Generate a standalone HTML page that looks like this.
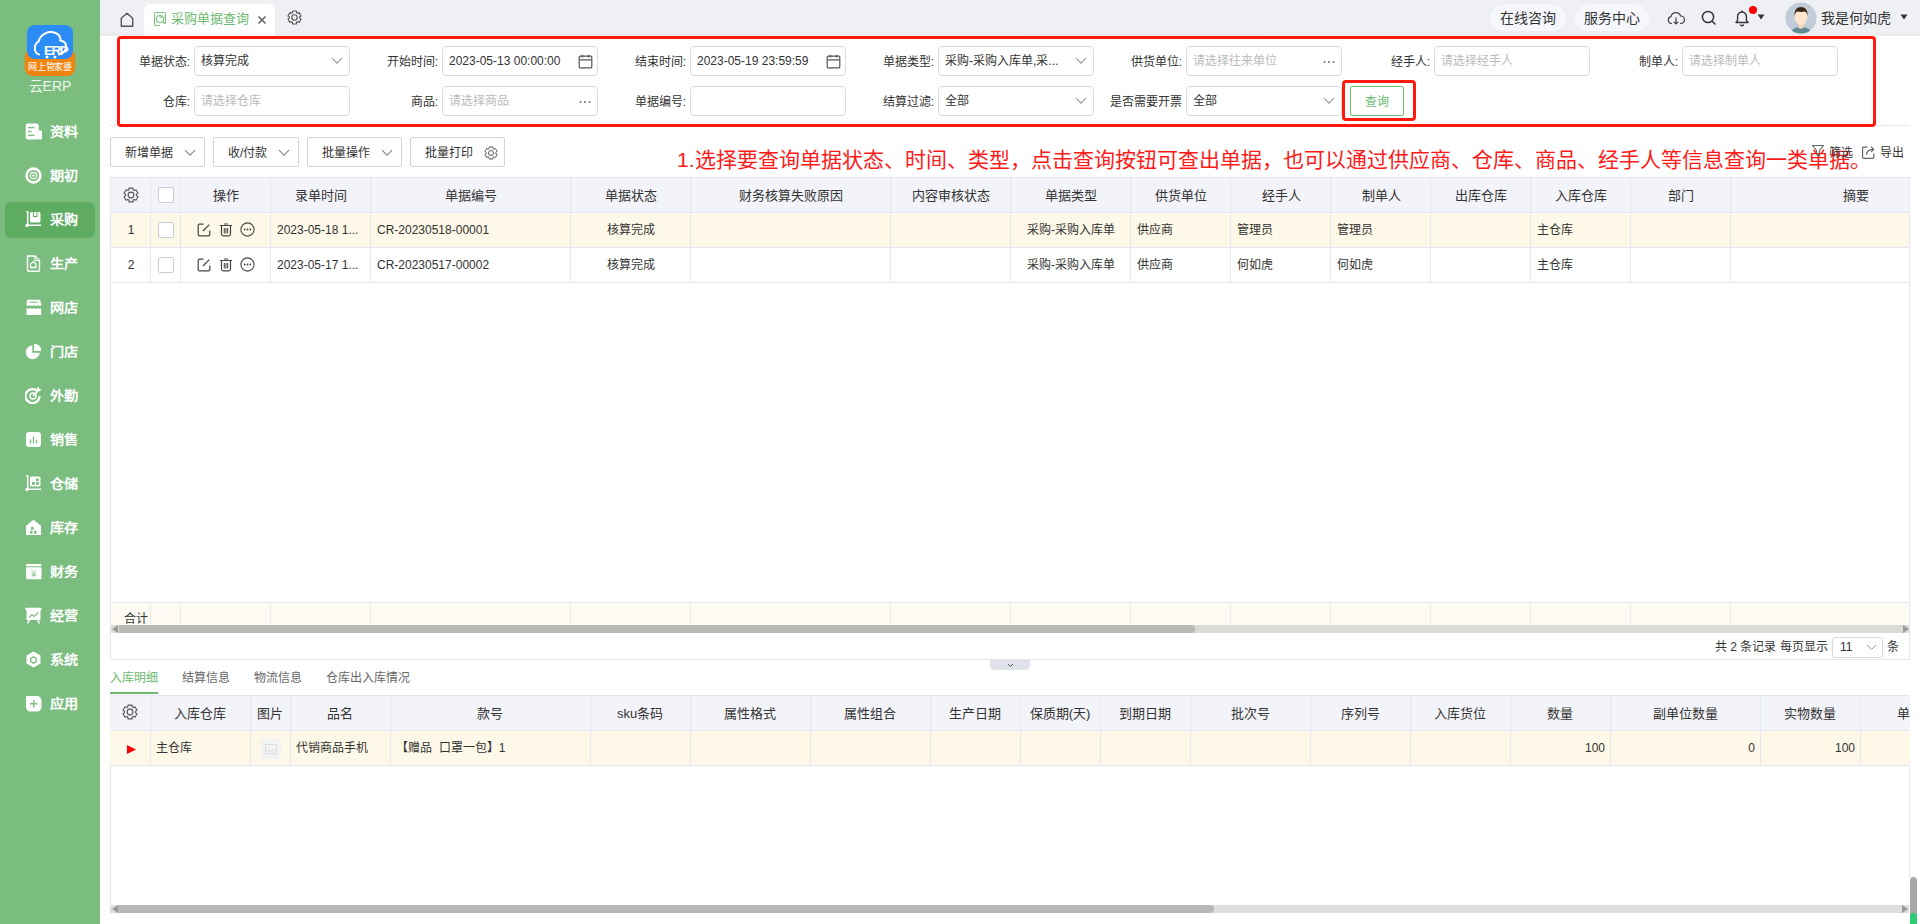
<!DOCTYPE html>
<html lang="zh-CN"><head><meta charset="utf-8">
<style>
*{box-sizing:border-box;margin:0;padding:0}
html,body{width:1920px;height:924px;overflow:hidden;background:#fff;font-family:"Liberation Sans",sans-serif;color:#333;font-size:12px}
.a{position:absolute}
#sb{position:absolute;left:0;top:0;width:100px;height:924px;background:#7bbd7f}
#top{position:absolute;left:100px;top:0;width:1820px;height:36px;background:linear-gradient(#eff0f4 0,#eff0f4 31px,#eaeaec 36px)}
.navt{color:#fff;font-weight:bold;font-size:13px;line-height:19px;transform:scaleX(1.09);transform-origin:0 0;white-space:nowrap}
.lbl{position:absolute;height:30px;line-height:30px;text-align:right;font-size:12px;color:#333;white-space:nowrap}
.inp{position:absolute;width:156px;height:30px;border:1px solid #dadada;border-radius:4px;background:#fff;line-height:28px;padding-left:6px;font-size:12px;color:#333;white-space:nowrap;overflow:hidden}
.ph{color:#bbb}
.btn{position:absolute;top:137px;height:30px;border:1px solid #d3d3d3;border-radius:2px;background:#fff;line-height:31px;font-size:12px;color:#333}
</style></head><body>
<div id="sb">
<svg class="a" style="left:24px;top:24px" width="52" height="54" viewBox="0 0 52 54">
<rect x="0.7" y="25" width="50.5" height="27" rx="8" fill="#f08410"/>
<rect x="3" y="1" width="46" height="34" rx="8" fill="#2b8cf6"/>
<path d="M15 30.5C10 29 9 21 14.5 17.5C16.5 10 25 6 31.5 9C34 10 36 12.5 36.5 15" fill="none" stroke="#fff" stroke-width="2" stroke-linecap="round"/>
<path d="M35 30.5C40 29.5 42 26 42 22.5C42 19 39.5 17 36 16.5" fill="none" stroke="#fff" stroke-width="2" stroke-linecap="round"/>
<text x="20" y="31" font-family="Liberation Sans" font-weight="bold" font-size="13.5" fill="#fff" letter-spacing="-1.6">ERP</text>
<circle cx="23" cy="33" r="1.5" fill="#fff"/><circle cx="31" cy="33" r="1.5" fill="#fff"/>
</svg>
<div class="a" style="left:24px;top:61px;width:52px;text-align:center;color:#fff;font-size:9px;line-height:12px;letter-spacing:-.2px">网上管家婆</div>
<div class="a" style="left:0;top:77px;width:100px;text-align:center;color:#eef6ee;font-size:14px;line-height:18px">云ERP</div>
<svg class="a" style="left:25px;top:123px" width="17" height="17" viewBox="0 0 17 17"><rect x="0.7" y="0.5" width="13" height="16" rx="2" fill="#fff"/><rect x="13.2" y="7.5" width="3.8" height="9" rx="1" fill="#fff"/><path d="M3 4.6h6.5M3 8.5h3.5M3 12.3h6.5" stroke="#7bbd7f" stroke-width="1.3"/></svg>
<div class="a navt" style="left:50px;top:122px">资料</div>
<svg class="a" style="left:25px;top:167px" width="17" height="17" viewBox="0 0 17 17"><circle cx="8.5" cy="8.5" r="6.9" fill="none" stroke="#fff" stroke-width="2.6"/><circle cx="8.5" cy="8.5" r="3.2" fill="none" stroke="#fff" stroke-width="1.2"/><circle cx="8.5" cy="8.5" r="1.2" fill="#fff"/></svg>
<div class="a navt" style="left:50px;top:166px">期初</div>
<div class="a" style="left:5px;top:202px;width:90px;height:36px;background:#5eab62;border-radius:6px"></div>
<svg class="a" style="left:25px;top:211px" width="17" height="17" viewBox="0 0 17 17"><path d="M1.2 0.8h1.5v13.5h13.5" fill="none" stroke="#fff" stroke-width="1.5"/><circle cx="2" cy="14.5" r="1.7" fill="#fff"/><rect x="5" y="1" width="10.5" height="10.5" rx="1.5" fill="#fff"/><path d="M8.5 1v4.5h3.5V1" fill="none" stroke="#5eab62" stroke-width="1.1"/></svg>
<div class="a navt" style="left:50px;top:210px">采购</div>
<svg class="a" style="left:25px;top:255px" width="17" height="17" viewBox="0 0 17 17"><path d="M2.5 1h7.5l4.5 4.5v9.5c0 .8-.6 1.3-1.3 1.3H3.8c-.8 0-1.3-.5-1.3-1.3z" fill="none" stroke="#fff" stroke-width="1.4"/><path d="M10 1v4.5h4.5" fill="none" stroke="#fff" stroke-width="1.2"/><path d="M5.5 12.5V9l2.8-2.3L11 9v3.5z" fill="none" stroke="#fff" stroke-width="1.3"/></svg>
<div class="a navt" style="left:50px;top:254px">生产</div>
<svg class="a" style="left:25px;top:299px" width="17" height="17" viewBox="0 0 17 17"><path d="M2 0.8h13l1.5 5.2c-.8 1.4-2.6 1.4-3.6 0-1 1.4-2.8 1.4-3.8 0-1 1.4-2.8 1.4-3.8 0-1 1.4-2.8 1.4-3.8 0z" fill="#fff"/><path d="M1.5 9c1 .9 2.7.9 3.7 0 1 .9 2.7.9 3.7 0 1 .9 2.7.9 3.7 0 1 .9 2.6.9 3.6 0v7H1.5z" fill="#fff"/><path d="M4.5 3.2h8" stroke="#7bbd7f" stroke-width="1.1"/></svg>
<div class="a navt" style="left:50px;top:298px">网店</div>
<svg class="a" style="left:25px;top:343px" width="17" height="17" viewBox="0 0 17 17"><path d="M7.3 2.2A7 7 0 1 0 14.8 9.7H7.3z" fill="#fff"/><path d="M9 0.7A7 7 0 0 1 16.3 8H9z" fill="#fff"/></svg>
<div class="a navt" style="left:50px;top:342px">门店</div>
<svg class="a" style="left:25px;top:387px" width="17" height="17" viewBox="0 0 17 17"><path d="M12.5 4.2A7 7 0 1 0 14.5 9" fill="none" stroke="#fff" stroke-width="2.2"/><circle cx="8" cy="9" r="3" fill="none" stroke="#fff" stroke-width="1.4"/><path d="M8 9l6-6" stroke="#fff" stroke-width="1.6"/><path d="M12 0.8l.3 3 3 .3 1.2-1.5-2.2-.3-.3-2.2z" fill="#fff"/></svg>
<div class="a navt" style="left:50px;top:386px">外勤</div>
<svg class="a" style="left:25px;top:431px" width="17" height="17" viewBox="0 0 17 17"><rect x="1" y="1" width="15" height="15" rx="3" fill="#fff"/><path d="M5.5 12.5V8.5M8.5 12.5V5.5M11.5 12.5V9" stroke="#7bbd7f" stroke-width="1.3"/></svg>
<div class="a navt" style="left:50px;top:430px">销售</div>
<svg class="a" style="left:25px;top:475px" width="17" height="17" viewBox="0 0 17 17"><path d="M1.2 0.8h1.5v13.5h13.5" fill="none" stroke="#fff" stroke-width="1.5"/><circle cx="2" cy="14.5" r="1.7" fill="#fff"/><rect x="5" y="1.5" width="10.5" height="10" rx="1.5" fill="#fff"/><rect x="7" y="7" width="2.8" height="2.8" fill="#7bbd7f"/><rect x="11" y="7" width="2.8" height="2.8" fill="#7bbd7f"/><rect x="11" y="3.5" width="2.8" height="2.5" fill="#7bbd7f"/></svg>
<div class="a navt" style="left:50px;top:474px">仓储</div>
<svg class="a" style="left:25px;top:519px" width="17" height="17" viewBox="0 0 17 17"><path d="M8.5 0.8l7.5 6V16H1V6.8z" fill="#fff"/><rect x="6" y="8" width="2.6" height="2.8" fill="#7bbd7f"/><rect x="5" y="11.8" width="2.6" height="2.8" fill="#7bbd7f"/><rect x="9" y="11.8" width="2.6" height="2.8" fill="#7bbd7f"/></svg>
<div class="a navt" style="left:50px;top:518px">库存</div>
<svg class="a" style="left:25px;top:563px" width="17" height="17" viewBox="0 0 17 17"><rect x="1" y="1" width="15.5" height="2.2" rx=".5" fill="#fff"/><rect x="1" y="4.2" width="15.5" height="12" rx="1" fill="#fff"/><path d="M6.3 7l2.5 2.6L11.3 7M8.8 9.6v4.4M6.5 10.8h4.6M6.5 12.3h4.6" stroke="#7bbd7f" stroke-width=".8" fill="none"/></svg>
<div class="a navt" style="left:50px;top:562px">财务</div>
<svg class="a" style="left:25px;top:607px" width="17" height="17" viewBox="0 0 17 17"><rect x="0.5" y="0.8" width="16" height="2.4" rx=".5" fill="#fff"/><rect x="1.5" y="3" width="14" height="10" fill="#fff"/><path d="M4 10.5l3-3 2.2 2 3.8-4" stroke="#7bbd7f" stroke-width="1.1" fill="none"/><path d="M4.5 12.5l-2 3.8M12.5 12.5l2 3.8" stroke="#fff" stroke-width="1.5"/></svg>
<div class="a navt" style="left:50px;top:606px">经营</div>
<svg class="a" style="left:25px;top:651px" width="17" height="17" viewBox="0 0 17 17"><path d="M8.5 0.5l7 4v8l-7 4-7-4v-8z" fill="#fff"/><path d="M8.5 5l3.4 2v3.9l-3.4 2-3.4-2V7z" fill="#7bbd7f"/><path d="M8.5 6.5l2.1 1.2v2.4l-2.1 1.2-2.1-1.2V7.7z" fill="#fff"/></svg>
<div class="a navt" style="left:50px;top:650px">系统</div>
<svg class="a" style="left:25px;top:695px" width="17" height="17" viewBox="0 0 17 17"><path d="M1 1h11a4.5 4.5 0 0 1 4.5 4.5v6.5A4.5 4.5 0 0 1 12 16.5H5.5A4.5 4.5 0 0 1 1 12z" fill="#fff"/><path d="M8.8 5v7.5M5 8.8h7.5" stroke="#7bbd7f" stroke-width="1.4"/></svg>
<div class="a navt" style="left:50px;top:694px">应用</div>
</div>
<div id="top">
<svg class="a" style="left:19px;top:12px" width="16" height="16" viewBox="0 0 16 16"><path d="M2.3 14.3V6.3L8 1.3l5.7 5v8z" fill="none" stroke="#555" stroke-width="1.4" stroke-linejoin="round"/></svg>
<div class="a" style="left:44px;top:4px;width:131px;height:32px;background:#fff;border-radius:6px 6px 0 0"></div>
<svg class="a" style="left:53px;top:11px" width="15" height="16" viewBox="0 0 15 16"><path d="M12.5 12.5V3.3c0-1-.8-1.8-1.8-1.8H3.3c-1 0-1.8.8-1.8 1.8v9.4c0 1 .8 1.8 1.8 1.8H7" fill="none" stroke="#7cc07f" stroke-width="1.1"/><circle cx="7" cy="8" r="3.5" fill="none" stroke="#7cc07f" stroke-width="1.1"/><path d="M9.5 10.5l2.5 2.5M6.5 6a2 2 0 0 1 2.5 1" stroke="#7cc07f" stroke-width="1.1" fill="none"/></svg>
<div class="a" style="left:71px;top:10px;font-size:13px;line-height:18px;color:#6cb96f">采购单据查询</div>
<svg class="a" style="left:157px;top:15px" width="10" height="10" viewBox="0 0 10 10"><path d="M1.5 1.5l7 7M8.5 1.5l-7 7" stroke="#666" stroke-width="1.6"/></svg>
<svg class="a" style="left:187px;top:10px" width="15" height="15" viewBox="0 0 16 16"><path d="M5.82 2.95 L5.96 1.10 L10.04 1.10 L10.18 2.95 L11.28 3.58 L12.96 2.78 L15.00 6.32 L13.46 7.37 L13.46 8.63 L15.00 9.68 L12.96 13.22 L11.28 12.42 L10.18 13.05 L10.04 14.90 L5.96 14.90 L5.82 13.05 L4.72 12.42 L3.04 13.22 L1.00 9.68 L2.54 8.63 L2.54 7.37 L1.00 6.32 L3.04 2.78 L4.72 3.58Z" fill="none" stroke="#555" stroke-width="1.2" stroke-linejoin="round"/><circle cx="8" cy="8" r="2.9" fill="none" stroke="#555" stroke-width="1.2"/></svg>
<div class="a" style="left:1391px;top:5px;width:74px;height:26px;border-radius:13px;background:#f5f7fc;border:1px solid #fafbfd;text-align:center;line-height:24px;font-size:14px;color:#333">在线咨询</div>
<div class="a" style="left:1475px;top:5px;width:74px;height:26px;border-radius:13px;background:#f5f7fc;border:1px solid #fafbfd;text-align:center;line-height:24px;font-size:14px;color:#333">服务中心</div>
<svg class="a" style="left:1567px;top:10px" width="18" height="16" viewBox="0 0 18 16"><path d="M5 13.5H4.5A3.5 3.5 0 0 1 4 6.6 5 5 0 0 1 13.6 6a3.5 3.5 0 0 1 .2 7.5H13" fill="none" stroke="#444" stroke-width="1.2"/><path d="M9 7.5v6.5M6.8 11.8L9 14l2.2-2.2" fill="none" stroke="#444" stroke-width="1.2"/></svg>
<svg class="a" style="left:1601px;top:10px" width="16" height="16" viewBox="0 0 16 16"><circle cx="7" cy="7" r="5.6" fill="none" stroke="#333" stroke-width="1.5"/><path d="M11.2 11.2l3.3 3.3" stroke="#333" stroke-width="1.5"/></svg>
<svg class="a" style="left:1634px;top:9px" width="16" height="18" viewBox="0 0 16 18"><path d="M2 13.5h12l-1.6-2.2V7.5A4.4 4.4 0 0 0 8 3a4.4 4.4 0 0 0-4.4 4.5v3.8z" fill="none" stroke="#333" stroke-width="1.4" stroke-linejoin="round"/><path d="M8 1.5V3M6.3 15.5a1.8 1.8 0 0 0 3.4 0" fill="none" stroke="#333" stroke-width="1.4"/></svg>
<div class="a" style="left:1649px;top:6px;width:8px;height:8px;border-radius:50%;background:#f00"></div>
<svg class="a" style="left:1657px;top:14px" width="8" height="6" viewBox="0 0 8 6"><path d="M0.5 .5h7L4 5.5z" fill="#333"/></svg>
<svg class="a" style="left:1685px;top:2px" width="32" height="32" viewBox="0 0 32 32"><defs><clipPath id="avc"><circle cx="16" cy="16" r="15.5"/></clipPath></defs><circle cx="16" cy="16" r="15.5" fill="#c2ccd8"/><g clip-path="url(#avc)"><path d="M6 32c0-5 4-7 10-7s10 2 10 7z" fill="#5f8a96"/><path d="M13.5 22h5v4c-1.5 1-3.5 1-5 0z" fill="#f3d4b4"/><ellipse cx="16" cy="15" rx="6.3" ry="8" fill="#fde6cc"/><path d="M9.5 14c-.5-6 2.5-9 6.5-9s7 3 6.5 9c-.5-2.5-1.5-4-2.5-4.5-2 .5-6 .5-8 0-1 .5-2 2-2.5 4.5z" fill="#3d2418"/></g></svg>
<div class="a" style="left:1721px;top:9px;font-size:14px;line-height:18px;color:#333">我是何如虎</div>
<svg class="a" style="left:1800px;top:14px" width="8" height="6" viewBox="0 0 8 6"><path d="M0.5 .5h7L4 5.5z" fill="#333"/></svg>
</div>
<!--filter-->
<div class="lbl" style="left:75px;top:47px;width:115px">单据状态:</div>
<div class="inp" style="left:194px;top:46px"><span class="">核算完成</span><svg class="a" style="right:6px;top:10px" width="12" height="8" viewBox="0 0 12 8"><path d="M1 1.2l5 5 5-5" fill="none" stroke="#999" stroke-width="1.1"/></svg></div>
<div class="lbl" style="left:323px;top:47px;width:115px">开始时间:</div>
<div class="inp" style="left:442px;top:46px"><span class="">2023-05-13 00:00:00</span><svg class="a" style="right:4px;top:7px" width="15" height="15" viewBox="0 0 15 15"><rect x="1.2" y="2.2" width="12.6" height="11.6" rx="1" fill="none" stroke="#555" stroke-width="1.2"/><path d="M1.2 5.8h12.6M4.5 0.8v2.6M10.5 0.8v2.6" stroke="#555" stroke-width="1.2"/></svg></div>
<div class="lbl" style="left:571px;top:47px;width:115px">结束时间:</div>
<div class="inp" style="left:690px;top:46px"><span class="">2023-05-19 23:59:59</span><svg class="a" style="right:4px;top:7px" width="15" height="15" viewBox="0 0 15 15"><rect x="1.2" y="2.2" width="12.6" height="11.6" rx="1" fill="none" stroke="#555" stroke-width="1.2"/><path d="M1.2 5.8h12.6M4.5 0.8v2.6M10.5 0.8v2.6" stroke="#555" stroke-width="1.2"/></svg></div>
<div class="lbl" style="left:819px;top:47px;width:115px">单据类型:</div>
<div class="inp" style="left:938px;top:46px"><span class="">采购-采购入库单,采...</span><svg class="a" style="right:6px;top:10px" width="12" height="8" viewBox="0 0 12 8"><path d="M1 1.2l5 5 5-5" fill="none" stroke="#999" stroke-width="1.1"/></svg></div>
<div class="lbl" style="left:1067px;top:47px;width:115px">供货单位:</div>
<div class="inp" style="left:1186px;top:46px"><span class="ph">请选择往来单位</span><svg class="a" style="right:5px;top:13px" width="14" height="4" viewBox="0 0 14 4"><circle cx="2.5" cy="2" r="1.1" fill="#777"/><circle cx="7" cy="2" r="1.1" fill="#777"/><circle cx="11.5" cy="2" r="1.1" fill="#777"/></svg></div>
<div class="lbl" style="left:1315px;top:47px;width:115px">经手人:</div>
<div class="inp" style="left:1434px;top:46px"><span class="ph">请选择经手人</span></div>
<div class="lbl" style="left:1563px;top:47px;width:115px">制单人:</div>
<div class="inp" style="left:1682px;top:46px"><span class="ph">请选择制单人</span></div>
<div class="lbl" style="left:75px;top:87px;width:115px">仓库:</div>
<div class="inp" style="left:194px;top:86px"><span class="ph">请选择仓库</span></div>
<div class="lbl" style="left:323px;top:87px;width:115px">商品:</div>
<div class="inp" style="left:442px;top:86px"><span class="ph">请选择商品</span><svg class="a" style="right:5px;top:13px" width="14" height="4" viewBox="0 0 14 4"><circle cx="2.5" cy="2" r="1.1" fill="#777"/><circle cx="7" cy="2" r="1.1" fill="#777"/><circle cx="11.5" cy="2" r="1.1" fill="#777"/></svg></div>
<div class="lbl" style="left:571px;top:87px;width:115px">单据编号:</div>
<div class="inp" style="left:690px;top:86px"><span class=""></span></div>
<div class="lbl" style="left:819px;top:87px;width:115px">结算过滤:</div>
<div class="inp" style="left:938px;top:86px"><span class="">全部</span><svg class="a" style="right:6px;top:10px" width="12" height="8" viewBox="0 0 12 8"><path d="M1 1.2l5 5 5-5" fill="none" stroke="#999" stroke-width="1.1"/></svg></div>
<div class="lbl" style="left:1067px;top:87px;width:115px">是否需要开票</div>
<div class="inp" style="left:1186px;top:86px"><span class="">全部</span><svg class="a" style="right:6px;top:10px" width="12" height="8" viewBox="0 0 12 8"><path d="M1 1.2l5 5 5-5" fill="none" stroke="#999" stroke-width="1.1"/></svg></div>
<div class="a" style="left:1350px;top:86px;width:54px;height:30px;border:1px solid #77bf7a;border-radius:2px;text-align:center;line-height:30px;color:#6cb96f;font-size:12px">查询</div>
<div class="a" style="left:110px;top:125px;width:1800px;height:1px;background:#e6e8ee"></div>
<div class="a" style="left:117px;top:36px;width:1759px;height:91px;border:3px solid #ff1a0d;border-radius:4px"></div>
<div class="a" style="left:1342px;top:80px;width:74px;height:41px;border:3px solid #ff1a0d;border-radius:4px"></div>
<!--table1-->
<div class="btn" style="left:110px;width:95px"><span class="a" style="left:14px;top:0">新增单据</span><svg class="a" style="right:8px;top:11px" width="12" height="8" viewBox="0 0 12 8"><path d="M1 1.2l5 5 5-5" fill="none" stroke="#888" stroke-width="1.1"/></svg></div>
<div class="btn" style="left:213px;width:86px"><span class="a" style="left:14px;top:0">收/付款</span><svg class="a" style="right:8px;top:11px" width="12" height="8" viewBox="0 0 12 8"><path d="M1 1.2l5 5 5-5" fill="none" stroke="#888" stroke-width="1.1"/></svg></div>
<div class="btn" style="left:307px;width:95px"><span class="a" style="left:14px;top:0">批量操作</span><svg class="a" style="right:8px;top:11px" width="12" height="8" viewBox="0 0 12 8"><path d="M1 1.2l5 5 5-5" fill="none" stroke="#888" stroke-width="1.1"/></svg></div>
<div class="btn" style="left:410px;width:95px"><span class="a" style="left:14px;top:0">批量打印</span></div>
<svg class="a" style="left:484px;top:146px" width="14" height="14" viewBox="0 0 16 16"><path d="M5.82 2.95 L5.96 1.10 L10.04 1.10 L10.18 2.95 L11.28 3.58 L12.96 2.78 L15.00 6.32 L13.46 7.37 L13.46 8.63 L15.00 9.68 L12.96 13.22 L11.28 12.42 L10.18 13.05 L10.04 14.90 L5.96 14.90 L5.82 13.05 L4.72 12.42 L3.04 13.22 L1.00 9.68 L2.54 8.63 L2.54 7.37 L1.00 6.32 L3.04 2.78 L4.72 3.58Z" fill="none" stroke="#555" stroke-width="1.1" stroke-linejoin="round"/><circle cx="8" cy="8" r="2.9" fill="none" stroke="#555" stroke-width="1.1"/></svg>
<div class="a" style="left:677px;top:146px;font-size:21px;line-height:28px;color:#ff1a1a;white-space:nowrap">1.选择要查询单据状态、时间、类型，点击查询按钮可查出单据，也可以通过供应商、仓库、商品、经手人等信息查询一类单据。</div>
<svg class="a" style="left:1811px;top:144px" width="14" height="14" viewBox="0 0 14 14"><path d="M1.5 1.5h11L8.5 6.5v5.5l-3-1.5V6.5z" fill="none" stroke="#666" stroke-width="1.1" stroke-linejoin="round"/></svg>
<div class="a" style="left:1829px;top:145px;font-size:12px;line-height:16px;color:#333">筛选</div>
<svg class="a" style="left:1861px;top:145px" width="16" height="15" viewBox="0 0 15 14"><path d="M6 2H2.5c-.6 0-1 .4-1 1v8.5c0 .6.4 1 1 1H11c.6 0 1-.4 1-1V8" fill="none" stroke="#666" stroke-width="1.1"/><path d="M5 9c.5-3 3-5 6.5-5M9.5 1.5l2.5 2.5-2.5 2.5" fill="none" stroke="#666" stroke-width="1.1"/></svg>
<div class="a" style="left:1880px;top:145px;font-size:12px;line-height:16px;color:#333">导出</div>
<div class="a" style="left:110px;top:177px;width:1800px;height:483px;border:1px solid #e4e7f0;overflow:hidden">
<div class="a" style="left:0;top:0;width:1800px;height:35px;background:#f3f4f9;border-bottom:1px solid #e4e7f0"></div>
<div class="a" style="left:0;top:35px;width:1800px;height:35px;background:#fdf8e8;border-bottom:1px solid #e4e7f0"></div>
<div class="a" style="left:0;top:70px;width:1800px;height:35px;background:#fff;border-bottom:1px solid #e4e7f0"></div>
<div class="a" style="left:0;top:424px;width:1800px;height:31px;background:#fdfbf3;border-top:1px solid #e4e7f0"></div>
<div class="a" style="left:39px;top:0;width:1px;height:105px;background:#e4e7f0"></div>
<div class="a" style="left:39px;top:424px;width:1px;height:31px;background:#ebeae4"></div>
<div class="a" style="left:69px;top:0;width:1px;height:105px;background:#e4e7f0"></div>
<div class="a" style="left:69px;top:424px;width:1px;height:31px;background:#ebeae4"></div>
<div class="a" style="left:70px;top:0;width:90px;height:35px;line-height:35px;text-align:center;font-size:13px;color:#333">操作</div>
<div class="a" style="left:159px;top:0;width:1px;height:105px;background:#e4e7f0"></div>
<div class="a" style="left:159px;top:424px;width:1px;height:31px;background:#ebeae4"></div>
<div class="a" style="left:160px;top:0;width:100px;height:35px;line-height:35px;text-align:center;font-size:13px;color:#333">录单时间</div>
<div class="a" style="left:259px;top:0;width:1px;height:105px;background:#e4e7f0"></div>
<div class="a" style="left:259px;top:424px;width:1px;height:31px;background:#ebeae4"></div>
<div class="a" style="left:260px;top:0;width:200px;height:35px;line-height:35px;text-align:center;font-size:13px;color:#333">单据编号</div>
<div class="a" style="left:459px;top:0;width:1px;height:105px;background:#e4e7f0"></div>
<div class="a" style="left:459px;top:424px;width:1px;height:31px;background:#ebeae4"></div>
<div class="a" style="left:460px;top:0;width:120px;height:35px;line-height:35px;text-align:center;font-size:13px;color:#333">单据状态</div>
<div class="a" style="left:579px;top:0;width:1px;height:105px;background:#e4e7f0"></div>
<div class="a" style="left:579px;top:424px;width:1px;height:31px;background:#ebeae4"></div>
<div class="a" style="left:580px;top:0;width:200px;height:35px;line-height:35px;text-align:center;font-size:13px;color:#333">财务核算失败原因</div>
<div class="a" style="left:779px;top:0;width:1px;height:105px;background:#e4e7f0"></div>
<div class="a" style="left:779px;top:424px;width:1px;height:31px;background:#ebeae4"></div>
<div class="a" style="left:780px;top:0;width:120px;height:35px;line-height:35px;text-align:center;font-size:13px;color:#333">内容审核状态</div>
<div class="a" style="left:899px;top:0;width:1px;height:105px;background:#e4e7f0"></div>
<div class="a" style="left:899px;top:424px;width:1px;height:31px;background:#ebeae4"></div>
<div class="a" style="left:900px;top:0;width:120px;height:35px;line-height:35px;text-align:center;font-size:13px;color:#333">单据类型</div>
<div class="a" style="left:1019px;top:0;width:1px;height:105px;background:#e4e7f0"></div>
<div class="a" style="left:1019px;top:424px;width:1px;height:31px;background:#ebeae4"></div>
<div class="a" style="left:1020px;top:0;width:100px;height:35px;line-height:35px;text-align:center;font-size:13px;color:#333">供货单位</div>
<div class="a" style="left:1119px;top:0;width:1px;height:105px;background:#e4e7f0"></div>
<div class="a" style="left:1119px;top:424px;width:1px;height:31px;background:#ebeae4"></div>
<div class="a" style="left:1120px;top:0;width:100px;height:35px;line-height:35px;text-align:center;font-size:13px;color:#333">经手人</div>
<div class="a" style="left:1219px;top:0;width:1px;height:105px;background:#e4e7f0"></div>
<div class="a" style="left:1219px;top:424px;width:1px;height:31px;background:#ebeae4"></div>
<div class="a" style="left:1220px;top:0;width:100px;height:35px;line-height:35px;text-align:center;font-size:13px;color:#333">制单人</div>
<div class="a" style="left:1319px;top:0;width:1px;height:105px;background:#e4e7f0"></div>
<div class="a" style="left:1319px;top:424px;width:1px;height:31px;background:#ebeae4"></div>
<div class="a" style="left:1320px;top:0;width:100px;height:35px;line-height:35px;text-align:center;font-size:13px;color:#333">出库仓库</div>
<div class="a" style="left:1419px;top:0;width:1px;height:105px;background:#e4e7f0"></div>
<div class="a" style="left:1419px;top:424px;width:1px;height:31px;background:#ebeae4"></div>
<div class="a" style="left:1420px;top:0;width:100px;height:35px;line-height:35px;text-align:center;font-size:13px;color:#333">入库仓库</div>
<div class="a" style="left:1519px;top:0;width:1px;height:105px;background:#e4e7f0"></div>
<div class="a" style="left:1519px;top:424px;width:1px;height:31px;background:#ebeae4"></div>
<div class="a" style="left:1520px;top:0;width:100px;height:35px;line-height:35px;text-align:center;font-size:13px;color:#333">部门</div>
<div class="a" style="left:1619px;top:0;width:1px;height:105px;background:#e4e7f0"></div>
<div class="a" style="left:1619px;top:424px;width:1px;height:31px;background:#ebeae4"></div>
<div class="a" style="left:1620px;top:0;width:250px;height:35px;line-height:35px;text-align:center;font-size:13px;color:#333">摘要</div>
<svg class="a" style="left:12px;top:9px" width="16" height="16" viewBox="0 0 16 16"><path d="M5.82 2.95 L5.96 1.10 L10.04 1.10 L10.18 2.95 L11.28 3.58 L12.96 2.78 L15.00 6.32 L13.46 7.37 L13.46 8.63 L15.00 9.68 L12.96 13.22 L11.28 12.42 L10.18 13.05 L10.04 14.90 L5.96 14.90 L5.82 13.05 L4.72 12.42 L3.04 13.22 L1.00 9.68 L2.54 8.63 L2.54 7.37 L1.00 6.32 L3.04 2.78 L4.72 3.58Z" fill="none" stroke="#555" stroke-width="1.1" stroke-linejoin="round"/><circle cx="8" cy="8" r="2.9" fill="none" stroke="#555" stroke-width="1.1"/></svg>
<div class="a" style="left:47px;top:9px;width:16px;height:16px;border:1px solid #c9cdd4;border-radius:2px;background:#fff"></div>
<div class="a" style="left:0;top:35px;width:40px;height:35px;line-height:35px;text-align:center">1</div>
<div class="a" style="left:47px;top:44px;width:16px;height:16px;border:1px solid #c9cdd4;border-radius:2px;background:#fff"></div>
<svg class="a" style="left:86px;top:45px" width="14" height="14" viewBox="0 0 14 14"><path d="M6.5 1.2H2.5c-.7 0-1.3.6-1.3 1.3v9c0 .7.6 1.3 1.3 1.3h9c.7 0 1.3-.6 1.3-1.3V7.5" fill="none" stroke="#444" stroke-width="1.2"/><path d="M6 8l6.3-6.3" stroke="#444" stroke-width="1.2"/></svg>
<svg class="a" style="left:108px;top:45px" width="14" height="14" viewBox="0 0 14 14"><path d="M1 2.5h12M5 1h4" stroke="#444" stroke-width="1.2"/><path d="M2.5 2.5v8.5c0 1 .8 1.8 1.8 1.8h5.4c1 0 1.8-.8 1.8-1.8V2.5" fill="none" stroke="#444" stroke-width="1.2"/><path d="M5.3 5v5.5M7 5v5.5M8.7 5v5.5" stroke="#444" stroke-width="1"/></svg>
<svg class="a" style="left:129px;top:44px" width="15" height="15" viewBox="0 0 15 15"><circle cx="7.5" cy="7.5" r="6.6" fill="none" stroke="#444" stroke-width="1.1"/><circle cx="4.7" cy="7.5" r=".9" fill="#444"/><circle cx="7.5" cy="7.5" r=".9" fill="#444"/><circle cx="10.3" cy="7.5" r=".9" fill="#444"/></svg>
<div class="a" style="left:160px;top:35px;width:100px;height:35px;line-height:35px;text-align:left;padding-left:6px;white-space:nowrap">2023-05-18 1...</div>
<div class="a" style="left:260px;top:35px;width:200px;height:35px;line-height:35px;text-align:left;padding-left:6px;white-space:nowrap">CR-20230518-00001</div>
<div class="a" style="left:460px;top:35px;width:120px;height:35px;line-height:35px;text-align:center;white-space:nowrap">核算完成</div>
<div class="a" style="left:900px;top:35px;width:120px;height:35px;line-height:35px;text-align:center;white-space:nowrap">采购-采购入库单</div>
<div class="a" style="left:1020px;top:35px;width:100px;height:35px;line-height:35px;text-align:left;padding-left:6px;white-space:nowrap">供应商</div>
<div class="a" style="left:1120px;top:35px;width:100px;height:35px;line-height:35px;text-align:left;padding-left:6px;white-space:nowrap">管理员</div>
<div class="a" style="left:1220px;top:35px;width:100px;height:35px;line-height:35px;text-align:left;padding-left:6px;white-space:nowrap">管理员</div>
<div class="a" style="left:1420px;top:35px;width:100px;height:35px;line-height:35px;text-align:left;padding-left:6px;white-space:nowrap">主仓库</div>
<div class="a" style="left:0;top:70px;width:40px;height:35px;line-height:35px;text-align:center">2</div>
<div class="a" style="left:47px;top:79px;width:16px;height:16px;border:1px solid #c9cdd4;border-radius:2px;background:#fff"></div>
<svg class="a" style="left:86px;top:80px" width="14" height="14" viewBox="0 0 14 14"><path d="M6.5 1.2H2.5c-.7 0-1.3.6-1.3 1.3v9c0 .7.6 1.3 1.3 1.3h9c.7 0 1.3-.6 1.3-1.3V7.5" fill="none" stroke="#444" stroke-width="1.2"/><path d="M6 8l6.3-6.3" stroke="#444" stroke-width="1.2"/></svg>
<svg class="a" style="left:108px;top:80px" width="14" height="14" viewBox="0 0 14 14"><path d="M1 2.5h12M5 1h4" stroke="#444" stroke-width="1.2"/><path d="M2.5 2.5v8.5c0 1 .8 1.8 1.8 1.8h5.4c1 0 1.8-.8 1.8-1.8V2.5" fill="none" stroke="#444" stroke-width="1.2"/><path d="M5.3 5v5.5M7 5v5.5M8.7 5v5.5" stroke="#444" stroke-width="1"/></svg>
<svg class="a" style="left:129px;top:79px" width="15" height="15" viewBox="0 0 15 15"><circle cx="7.5" cy="7.5" r="6.6" fill="none" stroke="#444" stroke-width="1.1"/><circle cx="4.7" cy="7.5" r=".9" fill="#444"/><circle cx="7.5" cy="7.5" r=".9" fill="#444"/><circle cx="10.3" cy="7.5" r=".9" fill="#444"/></svg>
<div class="a" style="left:160px;top:70px;width:100px;height:35px;line-height:35px;text-align:left;padding-left:6px;white-space:nowrap">2023-05-17 1...</div>
<div class="a" style="left:260px;top:70px;width:200px;height:35px;line-height:35px;text-align:left;padding-left:6px;white-space:nowrap">CR-20230517-00002</div>
<div class="a" style="left:460px;top:70px;width:120px;height:35px;line-height:35px;text-align:center;white-space:nowrap">核算完成</div>
<div class="a" style="left:900px;top:70px;width:120px;height:35px;line-height:35px;text-align:center;white-space:nowrap">采购-采购入库单</div>
<div class="a" style="left:1020px;top:70px;width:100px;height:35px;line-height:35px;text-align:left;padding-left:6px;white-space:nowrap">供应商</div>
<div class="a" style="left:1120px;top:70px;width:100px;height:35px;line-height:35px;text-align:left;padding-left:6px;white-space:nowrap">何如虎</div>
<div class="a" style="left:1220px;top:70px;width:100px;height:35px;line-height:35px;text-align:left;padding-left:6px;white-space:nowrap">何如虎</div>
<div class="a" style="left:1420px;top:70px;width:100px;height:35px;line-height:35px;text-align:left;padding-left:6px;white-space:nowrap">主仓库</div>
<div class="a" style="left:13px;top:434px;font-size:12px;line-height:14px;color:#333">合计</div>
<div class="a" style="left:0;top:447px;width:1800px;height:8px;background:#dcdcd7"></div>
<div class="a" style="left:8px;top:447px;width:1076px;height:8px;background:#b9b9b4;border-radius:0 4px 4px 0"></div>
<svg class="a" style="left:0;top:447px" width="8" height="8" viewBox="0 0 8 8"><path d="M7 0v8L1 4z" fill="#9a9a96"/></svg>
<svg class="a" style="left:1791px;top:447px" width="8" height="8" viewBox="0 0 8 8"><path d="M1 0v8l6-4z" fill="#9a9a96"/></svg>
<div class="a" style="left:1604px;top:462px;font-size:12px;line-height:14px;color:#333;white-space:nowrap">共 2 条记录 每页显示</div>
<div class="a" style="left:1721px;top:459px;width:51px;height:21px;border:1px solid #dadada;border-radius:3px;line-height:19px;padding-left:7px;font-size:12px">11<svg class="a" style="right:5px;top:6px" width="11" height="7" viewBox="0 0 11 7"><path d="M1 1l4.5 4.5L10 1" fill="none" stroke="#999" stroke-width="1"/></svg></div>
<div class="a" style="left:1776px;top:462px;font-size:12px;line-height:14px;color:#333">条</div>
</div>
<div class="a" style="left:990px;top:660px;width:40px;height:10px;background:#dfe2ea;border-radius:0 0 5px 5px"><svg class="a" style="left:17px;top:3px" width="7" height="5" viewBox="0 0 7 5"><path d="M1 1l2.5 2.5L6 1" fill="none" stroke="#555" stroke-width="1"/></svg></div>
<!--table2-->
<div class="a" style="left:110px;top:671px;font-size:12px;line-height:14px;color:#6cb96f;white-space:nowrap">入库明细</div>
<div class="a" style="left:182px;top:671px;font-size:12px;line-height:14px;color:#666;white-space:nowrap">结算信息</div>
<div class="a" style="left:254px;top:671px;font-size:12px;line-height:14px;color:#666;white-space:nowrap">物流信息</div>
<div class="a" style="left:326px;top:671px;font-size:12px;line-height:14px;color:#666;white-space:nowrap">仓库出入库情况</div>
<div class="a" style="left:110px;top:692px;width:48px;height:2px;background:#6cb96f"></div>
<div class="a" style="left:110px;top:695px;width:1800px;height:229px;overflow:hidden">
<div class="a" style="left:0;top:0;width:1800px;height:1px;background:#e4e7f0"></div>
<div class="a" style="left:0;top:0;width:1px;height:219px;background:#e4e7f0"></div>
<div class="a" style="left:1799px;top:0;width:1px;height:183px;background:#e4e7f0"></div>
<div class="a" style="left:0;top:1px;width:1800px;height:35px;background:#f3f4f9;border-bottom:1px solid #e4e7f0"></div>
<div class="a" style="left:0;top:36px;width:1800px;height:35px;background:#fdf8e8;border-bottom:1px solid #e4e7f0"></div>
<div class="a" style="left:40px;top:1px;width:1px;height:70px;background:#e4e7f0"></div>
<div class="a" style="left:40px;top:1px;width:100px;height:35px;line-height:35px;text-align:center;font-size:13px;color:#333;white-space:nowrap">入库仓库</div>
<div class="a" style="left:140px;top:1px;width:1px;height:70px;background:#e4e7f0"></div>
<div class="a" style="left:140px;top:1px;width:40px;height:35px;line-height:35px;text-align:center;font-size:13px;color:#333;white-space:nowrap">图片</div>
<div class="a" style="left:180px;top:1px;width:1px;height:70px;background:#e4e7f0"></div>
<div class="a" style="left:180px;top:1px;width:100px;height:35px;line-height:35px;text-align:center;font-size:13px;color:#333;white-space:nowrap">品名</div>
<div class="a" style="left:280px;top:1px;width:1px;height:70px;background:#e4e7f0"></div>
<div class="a" style="left:280px;top:1px;width:200px;height:35px;line-height:35px;text-align:center;font-size:13px;color:#333;white-space:nowrap">款号</div>
<div class="a" style="left:480px;top:1px;width:1px;height:70px;background:#e4e7f0"></div>
<div class="a" style="left:480px;top:1px;width:100px;height:35px;line-height:35px;text-align:center;font-size:13px;color:#333;white-space:nowrap">sku条码</div>
<div class="a" style="left:580px;top:1px;width:1px;height:70px;background:#e4e7f0"></div>
<div class="a" style="left:580px;top:1px;width:120px;height:35px;line-height:35px;text-align:center;font-size:13px;color:#333;white-space:nowrap">属性格式</div>
<div class="a" style="left:700px;top:1px;width:1px;height:70px;background:#e4e7f0"></div>
<div class="a" style="left:700px;top:1px;width:120px;height:35px;line-height:35px;text-align:center;font-size:13px;color:#333;white-space:nowrap">属性组合</div>
<div class="a" style="left:820px;top:1px;width:1px;height:70px;background:#e4e7f0"></div>
<div class="a" style="left:820px;top:1px;width:90px;height:35px;line-height:35px;text-align:center;font-size:13px;color:#333;white-space:nowrap">生产日期</div>
<div class="a" style="left:910px;top:1px;width:1px;height:70px;background:#e4e7f0"></div>
<div class="a" style="left:910px;top:1px;width:80px;height:35px;line-height:35px;text-align:center;font-size:13px;color:#333;white-space:nowrap">保质期(天)</div>
<div class="a" style="left:990px;top:1px;width:1px;height:70px;background:#e4e7f0"></div>
<div class="a" style="left:990px;top:1px;width:90px;height:35px;line-height:35px;text-align:center;font-size:13px;color:#333;white-space:nowrap">到期日期</div>
<div class="a" style="left:1080px;top:1px;width:1px;height:70px;background:#e4e7f0"></div>
<div class="a" style="left:1080px;top:1px;width:120px;height:35px;line-height:35px;text-align:center;font-size:13px;color:#333;white-space:nowrap">批次号</div>
<div class="a" style="left:1200px;top:1px;width:1px;height:70px;background:#e4e7f0"></div>
<div class="a" style="left:1200px;top:1px;width:100px;height:35px;line-height:35px;text-align:center;font-size:13px;color:#333;white-space:nowrap">序列号</div>
<div class="a" style="left:1300px;top:1px;width:1px;height:70px;background:#e4e7f0"></div>
<div class="a" style="left:1300px;top:1px;width:100px;height:35px;line-height:35px;text-align:center;font-size:13px;color:#333;white-space:nowrap">入库货位</div>
<div class="a" style="left:1400px;top:1px;width:1px;height:70px;background:#e4e7f0"></div>
<div class="a" style="left:1400px;top:1px;width:100px;height:35px;line-height:35px;text-align:center;font-size:13px;color:#333;white-space:nowrap">数量</div>
<div class="a" style="left:1500px;top:1px;width:1px;height:70px;background:#e4e7f0"></div>
<div class="a" style="left:1500px;top:1px;width:150px;height:35px;line-height:35px;text-align:center;font-size:13px;color:#333;white-space:nowrap">副单位数量</div>
<div class="a" style="left:1650px;top:1px;width:1px;height:70px;background:#e4e7f0"></div>
<div class="a" style="left:1650px;top:1px;width:100px;height:35px;line-height:35px;text-align:center;font-size:13px;color:#333;white-space:nowrap">实物数量</div>
<div class="a" style="left:1750px;top:1px;width:1px;height:70px;background:#e4e7f0"></div>
<div class="a" style="left:1750px;top:1px;width:100px;height:35px;line-height:35px;text-align:center;font-size:13px;color:#333;white-space:nowrap">单价</div>
<svg class="a" style="left:12px;top:9px" width="16" height="16" viewBox="0 0 16 16"><path d="M5.82 2.95 L5.96 1.10 L10.04 1.10 L10.18 2.95 L11.28 3.58 L12.96 2.78 L15.00 6.32 L13.46 7.37 L13.46 8.63 L15.00 9.68 L12.96 13.22 L11.28 12.42 L10.18 13.05 L10.04 14.90 L5.96 14.90 L5.82 13.05 L4.72 12.42 L3.04 13.22 L1.00 9.68 L2.54 8.63 L2.54 7.37 L1.00 6.32 L3.04 2.78 L4.72 3.58Z" fill="none" stroke="#555" stroke-width="1.1" stroke-linejoin="round"/><circle cx="8" cy="8" r="2.9" fill="none" stroke="#555" stroke-width="1.1"/></svg>
<svg class="a" style="left:17px;top:50px" width="9" height="9" viewBox="0 0 9 9"><path d="M0 0l9 4.5L0 9z" fill="#f00"/></svg>
<div class="a" style="left:40px;top:36px;width:100px;height:35px;line-height:35px;text-align:left;padding-left:6px;white-space:nowrap">主仓库</div>
<div class="a" style="left:151px;top:44px;width:20px;height:20px;background:#f2f2f2;border-radius:2px"><svg class="a" style="left:4px;top:5px" width="12" height="10" viewBox="0 0 12 10"><rect x=".5" y=".5" width="11" height="9" fill="none" stroke="#ddd" stroke-width="1"/><path d="M1 8.5l3-3 2 2 2-2.5 3 3.5" fill="none" stroke="#ddd" stroke-width="1"/></svg></div>
<div class="a" style="left:180px;top:36px;width:100px;height:35px;line-height:35px;text-align:left;padding-left:6px;white-space:nowrap">代销商品手机</div>
<div class="a" style="left:280px;top:36px;width:200px;height:35px;line-height:35px;text-align:left;padding-left:6px;white-space:nowrap">【赠品&nbsp;&nbsp;口罩一包】1</div>
<div class="a" style="left:1400px;top:36px;width:100px;height:35px;line-height:35px;text-align:right;padding-right:5px;white-space:nowrap">100</div>
<div class="a" style="left:1500px;top:36px;width:150px;height:35px;line-height:35px;text-align:right;padding-right:5px;white-space:nowrap">0</div>
<div class="a" style="left:1650px;top:36px;width:100px;height:35px;line-height:35px;text-align:right;padding-right:5px;white-space:nowrap">100</div>
<div class="a" style="left:0;top:210px;width:1799px;height:8px;background:#dedede"></div>
<div class="a" style="left:8px;top:210px;width:1096px;height:8px;background:#b9b9b9;border-radius:0 4px 4px 0"></div>
<svg class="a" style="left:1px;top:210px" width="8" height="8" viewBox="0 0 8 8"><path d="M7 0v8L1 4z" fill="#999"/></svg>
<svg class="a" style="left:1792px;top:210px" width="7" height="8" viewBox="0 0 7 8"><path d="M0 0v8l6-4z" fill="#999"/></svg>
</div>
<div class="a" style="left:1910px;top:877px;width:7px;height:47px;background:#a8a8a8;border-radius:4px 4px 0 0"></div>
<div class="a" style="left:1910px;top:913px;width:7px;height:11px;background:#2ecc71;border-radius:3px 3px 0 0"></div>
</body></html>
